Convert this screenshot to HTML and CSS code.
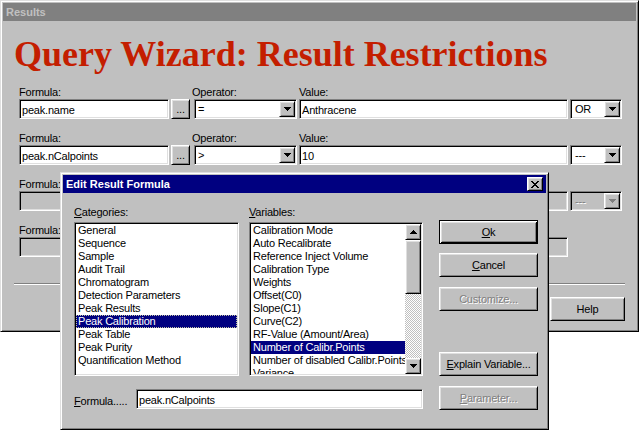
FILE: index.html
```html
<!DOCTYPE html>
<html lang="en">
<head>
    <meta charset="UTF-8">
    <title>Results</title>
    <link rel="stylesheet" href="styles.css">
</head>
<body>
    <div class="window main-win">
        <div class="titlebar inactive">Results</div>
        <div class="main-body">
            <h1 class="heading">Query Wizard: Result Restrictions</h1>

            <!-- restriction 1 -->
            <div class="row">
                <div class="field"><span class="lbl">Formula:</span><div class="edit w-formula">peak.name</div></div>
                <div class="field"><span class="lbl"></span><div class="btn dots">...</div></div>
                <div class="field"><span class="lbl">Operator:</span>
                    <div class="combo w-op"><span class="combo-val">=</span><span class="btn drop"><svg width="7" height="4" viewBox="0 0 7 4"><path d="M0 0h7v1h-7zM1 1h5v1h-5zM2 2h3v1h-3zM3 3h1v1h-1z"/></svg></span></div>
                </div>
                <div class="field"><span class="lbl">Value:</span><div class="edit w-value">Anthracene</div></div>
                <div class="field"><span class="lbl"></span>
                    <div class="combo w-join"><span class="combo-val">OR</span><span class="btn drop"><svg width="7" height="4" viewBox="0 0 7 4"><path d="M0 0h7v1h-7zM1 1h5v1h-5zM2 2h3v1h-3zM3 3h1v1h-1z"/></svg></span></div>
                </div>
            </div>

            <!-- restriction 2 -->
            <div class="row">
                <div class="field"><span class="lbl">Formula:</span><div class="edit w-formula">peak.nCalpoints</div></div>
                <div class="field"><span class="lbl"></span><div class="btn dots">...</div></div>
                <div class="field"><span class="lbl">Operator:</span>
                    <div class="combo w-op"><span class="combo-val">&gt;</span><span class="btn drop"><svg width="7" height="4" viewBox="0 0 7 4"><path d="M0 0h7v1h-7zM1 1h5v1h-5zM2 2h3v1h-3zM3 3h1v1h-1z"/></svg></span></div>
                </div>
                <div class="field"><span class="lbl">Value:</span><div class="edit w-value">10</div></div>
                <div class="field"><span class="lbl"></span>
                    <div class="combo w-join"><span class="combo-val">---</span><span class="btn drop"><svg width="7" height="4" viewBox="0 0 7 4"><path d="M0 0h7v1h-7zM1 1h5v1h-5zM2 2h3v1h-3zM3 3h1v1h-1z"/></svg></span></div>
                </div>
            </div>

            <!-- restriction 3 (empty) -->
            <div class="row disabled">
                <div class="field"><span class="lbl">Formula:</span><div class="edit w-formula"></div></div>
                <div class="field"><span class="lbl"></span><div class="btn dots">...</div></div>
                <div class="field"><span class="lbl">Operator:</span>
                    <div class="combo w-op"><span class="combo-val"></span><span class="btn drop"><svg width="7" height="4" viewBox="0 0 7 4"><path d="M0 0h7v1h-7zM1 1h5v1h-5zM2 2h3v1h-3zM3 3h1v1h-1z"/></svg></span></div>
                </div>
                <div class="field"><span class="lbl">Value:</span><div class="edit w-value"></div></div>
                <div class="field"><span class="lbl"></span>
                    <div class="combo w-join"><span class="combo-val">---</span><span class="btn drop"><svg width="7" height="4" viewBox="0 0 7 4"><path d="M0 0h7v1h-7zM1 1h5v1h-5zM2 2h3v1h-3zM3 3h1v1h-1z"/></svg></span></div>
                </div>
            </div>

            <!-- restriction 4 (empty, last) -->
            <div class="row disabled">
                <div class="field"><span class="lbl">Formula:</span><div class="edit w-formula"></div></div>
                <div class="field"><span class="lbl"></span><div class="btn dots">...</div></div>
                <div class="field"><span class="lbl">Operator:</span>
                    <div class="combo w-op"><span class="combo-val"></span><span class="btn drop"><svg width="7" height="4" viewBox="0 0 7 4"><path d="M0 0h7v1h-7zM1 1h5v1h-5zM2 2h3v1h-3zM3 3h1v1h-1z"/></svg></span></div>
                </div>
                <div class="field"><span class="lbl">Value:</span><div class="edit w-value"></div></div>
            </div>

            <div class="sep"></div>
            <div class="footer">
                <div class="btn push help">Help</div>
            </div>
        </div>
    </div>

    <!-- modal dialog on top of the wizard -->
    <div class="window dialog">
        <div class="titlebar active">
            <span>Edit Result Formula</span>
            <span class="btn close"><svg width="8" height="7" viewBox="0 0 8 7"><path d="M0 0h2v1h-2zM6 0h2v1h-2zM1 1h2v1h-2zM5 1h2v1h-2zM2 2h4v1h-4zM3 3h2v1h-2zM2 4h4v1h-4zM1 5h2v1h-2zM5 5h2v1h-2zM0 6h2v1h-2zM6 6h2v1h-2z"/></svg></span>
        </div>
        <div class="dlg-body">
            <div class="dlg-main">
                <div class="lists">
                    <div class="list-col cat">
                        <div class="lbl list-lbl"><u>C</u>ategories:</div>
                        <div class="listbox">
                            <div class="items">
                                <div class="item">General</div>
                                <div class="item">Sequence</div>
                                <div class="item">Sample</div>
                                <div class="item">Audit Trail</div>
                                <div class="item">Chromatogram</div>
                                <div class="item">Detection Parameters</div>
                                <div class="item">Peak Results</div>
                                <div class="item selected focus">Peak Calibration</div>
                                <div class="item">Peak Table</div>
                                <div class="item">Peak Purity</div>
                                <div class="item">Quantification Method</div>
                            </div>
                        </div>
                    </div>
                    <div class="list-col var">
                        <div class="lbl list-lbl"><u>V</u>ariables:</div>
                        <div class="listbox">
                            <div class="items">
                                <div class="item">Calibration Mode</div>
                                <div class="item">Auto Recalibrate</div>
                                <div class="item">Reference Inject Volume</div>
                                <div class="item">Calibration Type</div>
                                <div class="item">Weights</div>
                                <div class="item">Offset(C0)</div>
                                <div class="item">Slope(C1)</div>
                                <div class="item">Curve(C2)</div>
                                <div class="item">RF-Value (Amount/Area)</div>
                                <div class="item selected">Number of Calibr.Points</div>
                                <div class="item">Number of disabled Calibr.Points</div>
                                <div class="item">Variance</div>
                            </div>
                            <div class="scrollbar">
                                <span class="btn sb-arrow"><svg width="7" height="4" viewBox="0 0 7 4"><path d="M3 0h1v1h-1zM2 1h3v1h-3zM1 2h5v1h-5zM0 3h7v1h-7z"/></svg></span>
                                <span class="btn sb-thumb"></span>
                                <span class="sb-track"></span>
                                <span class="btn sb-arrow"><svg width="7" height="4" viewBox="0 0 7 4"><path d="M0 0h7v1h-7zM1 1h5v1h-5zM2 2h3v1h-3zM3 3h1v1h-1z"/></svg></span>
                            </div>
                        </div>
                    </div>
                </div>
                <div class="formula-row">
                    <span class="lbl formula-lbl"><u>F</u>ormula.....</span>
                    <div class="edit formula-edit">peak.nCalpoints</div>
                </div>
            </div>
            <div class="dlg-buttons">
                <div class="btn push default"><span><u>O</u>k</span></div>
                <div class="btn push b-cancel"><span><u>C</u>ancel</span></div>
                <div class="btn push b-custom off">Customize...</div>
                <div class="btn push b-explain"><span><u>E</u>xplain Variable...</span></div>
                <div class="btn push b-param off"><span><u>P</u>arameter...</span></div>
            </div>
        </div>
    </div>
</body>
</html>
```

FILE: styles.css
```css
* {
    box-sizing: border-box;
}
body {
    margin: 0;
    background: #fff;
    font-family: "Liberation Sans", Arial, sans-serif;
    font-size: 11px;
    letter-spacing: -0.2px;
    color: #000;
}
u {
    text-decoration: underline;
    text-underline-offset: 1px;
}

/* window frames */
.window {
    background: #c0c0c0;
    border: 1px solid;
    border-color: #dfdfdf #000 #000 #dfdfdf;
    box-shadow: inset 1px 1px #fff, inset -1px -1px #808080;
    padding: 2px;
}
.main-win {
    width: 639px;
    height: 332px;
}
.titlebar {
    height: 18px;
    display: flex;
    align-items: center;
    padding: 0 3px;
    font-weight: bold;
    letter-spacing: 0;
}
.titlebar.inactive {
    background: #808080;
    color: #c0c0c0;
}
.titlebar.active {
    background: #000080;
    color: #fff;
}

/* bevels */
.btn {
    background: #c0c0c0;
    border: 1px solid;
    border-color: #fff #000 #000 #fff;
    box-shadow: inset 1px 1px #dfdfdf, inset -1px -1px #808080;
    display: flex;
    align-items: center;
    justify-content: center;
}
.edit, .combo, .listbox {
    background: #fff;
    border: 1px solid;
    border-color: #808080 #fff #fff #808080;
    box-shadow: inset 1px 1px #000, inset -1px -1px #dfdfdf;
}
.edit {
    height: 20px;
    padding: 1px 2px 0;
    line-height: 18px;
    white-space: nowrap;
    overflow: hidden;
}
.combo {
    height: 20px;
    padding: 1px;
    display: flex;
}
.combo-val {
    flex: 1;
    padding-left: 2px;
    line-height: 17px;
}
.drop {
    width: 16px;
    height: 16px;
}
.drop svg {
    fill: #000;
}

/* wizard body */
.main-body {
    padding: 0 11px;
}
.heading {
    margin: 13px 0 0;
    font-family: "Liberation Serif", "Times New Roman", serif;
    font-size: 36px;
    line-height: 40px;
    font-weight: bold;
    letter-spacing: 0;
    color: #c41e00;
    white-space: nowrap;
}
.row {
    display: flex;
    gap: 2px;
    padding-left: 5px;
    margin-top: 13px;
}
.heading + .row {
    margin-top: 12px;
}
.field {
    display: flex;
    flex-direction: column;
}
.lbl {
    display: block;
    height: 13px;
    line-height: 13px;
    white-space: nowrap;
}
.w-formula { width: 150px; }
.dots {
    width: 19px;
    height: 20px;
    align-items: flex-end;
    padding-bottom: 3px;
    line-height: 11px;
}
.w-op { width: 103px; margin-left: 2px; }
.w-value { width: 269px; }
.w-join { width: 52px; }
.w-join .combo-val { padding-left: 3px; }

.row.disabled .edit,
.row.disabled .combo {
    background: #c0c0c0;
}
.row.disabled .combo-val {
    color: #808080;
    text-shadow: 1px 1px #fff;
}
.row.disabled .drop svg {
    fill: #808080;
}

.sep {
    margin-top: 26px;
    height: 2px;
    border-top: 1px solid #808080;
    border-bottom: 1px solid #fff;
}
.footer {
    display: flex;
    justify-content: flex-end;
    margin-top: 12px;
}
.push {
    height: 24px;
}
.help {
    width: 75px;
}

/* dialog */
.dialog {
    position: absolute;
    left: 60px;
    top: 172px;
    width: 489px;
    height: 258px;
}
.close {
    margin-left: auto;
    width: 16px;
    height: 14px;
}
.dlg-body {
    display: flex;
    padding: 13px 0 0 11px;
}
.dlg-main {
    width: 349px;
}
.lists {
    display: flex;
    gap: 10px;
}
.cat { width: 165px; }
.var { width: 174px; }
.list-lbl {
    margin-bottom: 3px;
}
.listbox {
    height: 154px;
    padding: 1px;
    display: flex;
    overflow: hidden;
}
.items {
    flex: 1;
    min-width: 0;
    overflow: hidden;
}
.item {
    height: 13px;
    line-height: 13px;
    padding-left: 2px;
    white-space: nowrap;
}
.item.selected {
    background: #000080;
    color: #fff;
}
.item.focus {
    outline: 1px dotted #c0c0a0;
    outline-offset: -1px;
}
.scrollbar {
    width: 16px;
    display: flex;
    flex-direction: column;
}
.sb-arrow {
    height: 16px;
    flex: none;
}
.sb-thumb {
    height: 54px;
    flex: none;
}
.sb-track {
    flex: 1;
    background-color: #fff;
    background-image: repeating-conic-gradient(#c0c0c0 0 25%, #fff 0 50%);
    background-size: 2px 2px;
}
.formula-row {
    display: flex;
    align-items: flex-end;
    margin-top: 13px;
}
.formula-lbl {
    width: 62px;
    margin-bottom: 1px;
}
.formula-edit {
    flex: 1;
}

.dlg-buttons {
    width: 99px;
    margin-left: 16px;
    margin-top: 14px;
    display: flex;
    flex-direction: column;
}
.default {
    border-color: #000;
    box-shadow: inset 1px 1px #fff, inset -1px -1px #000, inset 2px 2px #dfdfdf, inset -2px -2px #808080;
}
.b-cancel { margin-top: 9px; }
.b-custom { margin-top: 10px; }
.b-explain { margin-top: 41px; }
.b-param { margin-top: 10px; }
.off {
    color: #808080;
    text-shadow: 1px 1px #fff;
}
```
